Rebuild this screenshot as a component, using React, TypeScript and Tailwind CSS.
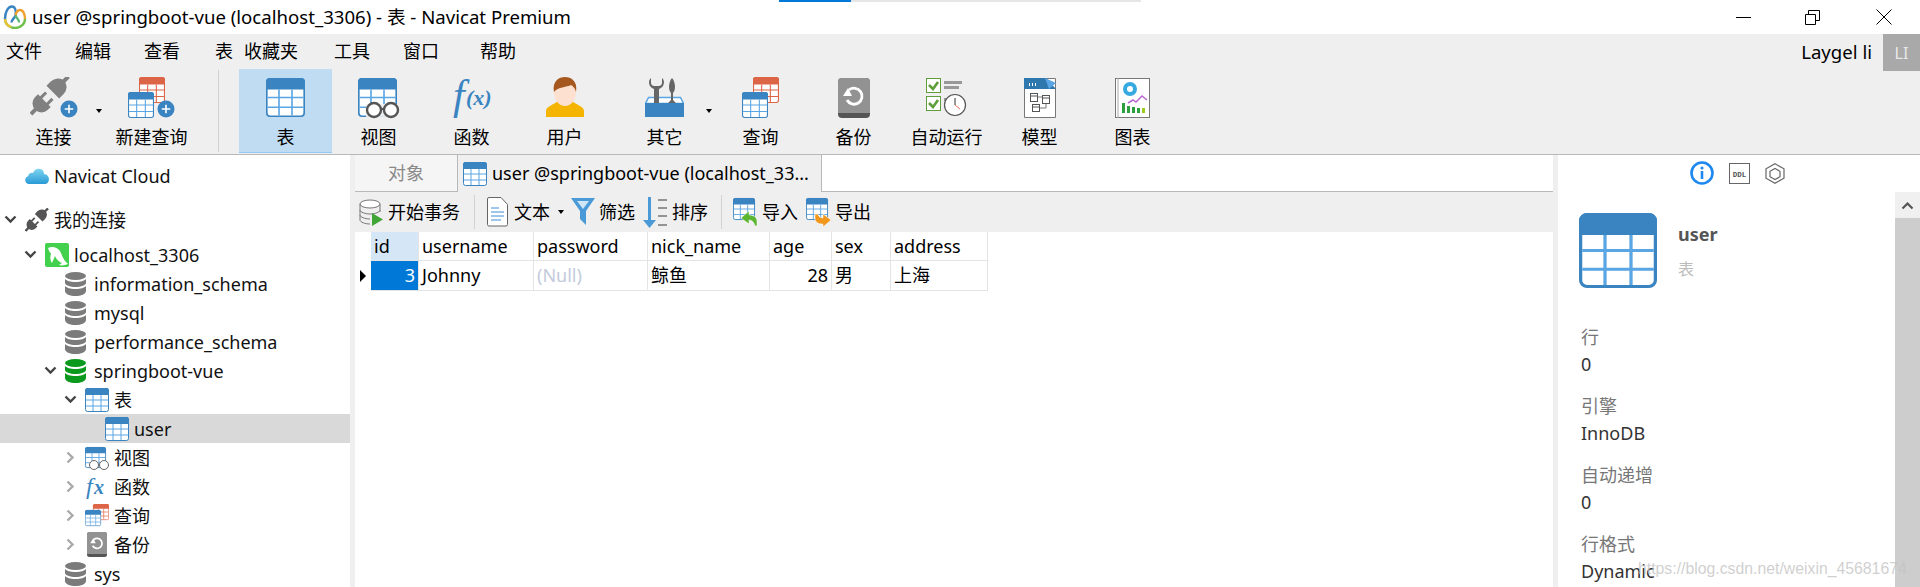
import type { ReactNode } from "react";

const BLUE = "#3a84c1";
const GRID = "#5aa5e3";
const RED = "#dc6447";

function TableIconGroup({ size, head, line }: { size: number; head: string; line: string }) {
  const s = size / 24;
  return (
    <g transform={`scale(${s})`}>
      <rect x="0.5" y="0.5" width="23" height="23" rx="2" fill="#fff" stroke={head} />
      <path d="M0 2.5a2.5 2.5 0 0 1 2.5-2.5h19a2.5 2.5 0 0 1 2.5 2.5v4.5h-24z" fill={head} />
      <path d="M8 7v16M16 7v16M1 12h22M1 18h22" stroke={line} strokeWidth="1" fill="none" />
    </g>
  );
}

function TableIcon({ w = 24, h = 24 }: { w?: number; h?: number }) {
  return (
    <svg width={w} height={h} viewBox="0 0 24 24" className="shrink-0" preserveAspectRatio="none">
      <TableIconGroup size={24} head={BLUE} line={GRID} />
    </svg>
  );
}

function Plug({ color = "#808080" }: { color?: string }) {
  return (
    <g transform="translate(20 18) rotate(45)" fill={color}>
      <rect x="-2" y="-26" width="4" height="8" />
      <path d="M-9 -4V-10A9 10 0 0 1 9 -10V-4z" />
      <rect x="-6" y="1" width="3" height="8" />
      <rect x="3" y="1" width="3" height="8" />
      <path d="M-9 8H9V12A9 9 0 0 1 -9 12z" />
      <rect x="-2" y="19" width="4" height="8" />
    </g>
  );
}

function PlusBadge({ cx, cy, r }: { cx: number; cy: number; r: number }) {
  return (
    <g>
      <circle cx={cx} cy={cy} r={r} fill={BLUE} />
      <path d={`M${cx - r / 2} ${cy}h${r}M${cx} ${cy - r / 2}v${r}`} stroke="#fff" strokeWidth="1.6" />
    </g>
  );
}

function ConnectIcon() {
  return (
    <svg width="48" height="41" viewBox="0 0 48 41">
      <Plug />
      <PlusBadge cx={39} cy={32} r={8.5} />
    </svg>
  );
}

function QueryIcon({ badge = false }: { badge?: boolean }) {
  return (
    <svg width={badge ? 48 : 37} height="42" viewBox={badge ? "0 0 48 42" : "0 0 37 42"}>
      <g transform="translate(11 0)">
        <TableIconGroup size={26} head={RED} line={RED} />
      </g>
      <g transform="translate(0 15)">
        <TableIconGroup size={26} head={BLUE} line={GRID} />
      </g>
      {badge && <PlusBadge cx={38} cy={32} r={8.5} />}
    </svg>
  );
}

function ViewIcon({ size = 42 }: { size?: number }) {
  return (
    <svg width={size} height={size} viewBox="0 0 42 42">
      <g transform="translate(0 1)">
        <TableIconGroup size={39} head={BLUE} line={GRID} />
      </g>
      <rect x="8" y="27" width="36" height="15" fill="#efefef" opacity="0.9" />
      <circle cx="16" cy="33" r="7" fill="#fff" stroke="#555" strokeWidth="2.4" />
      <circle cx="33" cy="33" r="7" fill="#fff" stroke="#555" strokeWidth="2.4" />
      <path d="M23 32h3" stroke="#555" strokeWidth="2" />
    </svg>
  );
}

function FxIcon() {
  return (
    <svg width="46" height="46" viewBox="0 0 46 46" className="mb-[6px]">
      <text x="4" y="37" fill={BLUE} fontSize="42" fontStyle="italic" fontFamily="'Liberation Serif', serif">f</text>
      <text x="17" y="33" fill={BLUE} fontSize="22" fontWeight="700" fontStyle="italic" fontFamily="'Liberation Serif', serif">(x)</text>
    </svg>
  );
}

function UserIcon() {
  return (
    <svg width="38" height="42" viewBox="0 0 38 42">
      <path d="M0 40v-6c0-5 8-6 12-10h14c4 4 12 5 12 10v6z" fill="#f5b400" />
      <ellipse cx="19" cy="15" rx="11" ry="14" fill="#fde0cf" />
      <path d="M8 15C6 4 13 0 19 0s13 4 11 15c-1-4-3-6-5-7-4 2-13 2-17 7z" fill="#a5571d" />
    </svg>
  );
}

function ToolsIcon() {
  return (
    <svg width="39" height="40" viewBox="0 0 39 40">
      <path d="M3.5 19.500h32l3 6H0.500z" fill="#fff" stroke={GRID} strokeWidth="1.5" />
      <rect x="0" y="25" width="39" height="14" fill={BLUE} />
      <path d="M6 0c-3 2-3 9 3 11v14h5V11c6-2 6-9 3-11v5c0 2-2 3-3 3H9C8 8 6 7 6 5z" fill="#666" />
      <path d="M27 0c2 2 3 6 3 9 0 3-1 5-2 6v7l3 3h-8l3-3v-7c-1-1-2-3-2-6 0-3 1-7 3-9z" fill="#666" />
    </svg>
  );
}

function BackupIcon({ size = 32 }: { size?: number }) {
  return (
    <svg width={size} height={size * 1.25} viewBox="0 0 32 40">
      <rect width="32" height="40" rx="4" fill="#555" />
      <path d="M0 4a4 4 0 0 1 4-4h24a4 4 0 0 1 4 4v31H0z" fill="#929292" />
      <path d="M11 12a8 8 0 1 1-2 10" stroke="#fff" strokeWidth="2.8" fill="none" />
      <path d="M5 18l5-8 4 8z" fill="#fff" />
    </svg>
  );
}

function AutoIcon() {
  return (
    <svg width="41" height="39" viewBox="0 0 41 39">
      <rect x="0.5" y="0.5" width="14" height="14" fill="#fff" stroke="#5f9e3b" />
      <rect x="0.5" y="18.5" width="14" height="14" fill="#fff" stroke="#5f9e3b" />
      <path d="M3 7l4 4 5-7M3 25l4 4 5-7" stroke="#5f9e3b" strokeWidth="2.6" fill="none" />
      <path d="M18 3h18v3H18zM18 8h15v3H18zM18 20h4v3h-4z" fill="#999" />
      <circle cx="29" cy="27" r="10.5" fill="#fff" stroke="#555" strokeWidth="1.2" />
      <path d="M29 20v7" stroke="#333" fill="none" />
      <path d="M29 27l5 4" stroke="#e8765b" />
    </svg>
  );
}

function ModelIcon() {
  return (
    <svg width="32" height="40" viewBox="0 0 32 40">
      <path d="M0.5 0.500h31v39h-31z" fill="#fff" stroke="#777" />
      <path d="M0 0h22l10 11H0z" fill="#2f78ae" />
      <path d="M21 0l11 5-7 6z" fill="#5aa5e3" />
      <path d="M5 5h1v3H5zM8 5h1v3H8zM11 5h1v3h-1z" fill="#fff" />
      <path d="M14 19h4M22 25v5h-7" stroke="#777" fill="none" />
      <g fill="#fff" stroke="#555">
        <rect x="6.5" y="15.500" width="7" height="8" />
        <rect x="18.5" y="17.500" width="7" height="8" />
        <rect x="8.5" y="26.500" width="7" height="7" />
      </g>
      <path d="M6 18h8M18 20h8M8 29h8" stroke="#555" fill="none" />
    </svg>
  );
}

function ChartIcon() {
  return (
    <svg width="35" height="40" viewBox="0 0 35 40">
      <rect x="0.5" y="0.500" width="34" height="39" fill="#fff" stroke="#777" />
      <path d="M3 0v40" stroke="#aaa" />
      <circle cx="15" cy="11" r="5" fill="none" stroke="#35a9e0" strokeWidth="4" />
      <path d="M13 25l5-3 3 2 6-6 5 4" stroke="#b86ad0" strokeWidth="1.5" fill="none" />
      <path d="M7 25h3v10H7zM12 28h3v7h-3zM17 29h3v6h-3zM22 30h3v5h-3z" fill="#2e9f3e" />
      <path d="M27 30h3v5h-3z" fill="#9ccc1e" />
    </svg>
  );
}

function Caret({ className = "" }: { className?: string }) {
  return <span className={`w-0 h-0 border-x-[3px] border-x-transparent border-t-[4px] border-t-black ${className}`} />;
}

function ToolButton({ label, icon, active, children }: { label: string; icon: ReactNode; active?: boolean; children?: ReactNode }) {
  return (
    <div className={`relative flex flex-col items-center w-[93px] h-[84px] shrink-0 ${active ? "bg-[#c0dcf3] border-b-[1px] border-b-[#90c8f6]" : ""}`}>
      <div className="h-[49px] mt-[4px] flex items-center justify-center">{icon}</div>
      <div className="text-[18px] leading-[24px] mt-[3px] whitespace-nowrap text-black">{label}</div>
      {children}
    </div>
  );
}

function DbIcon({ color = "#7b7b7b" }: { color?: string }) {
  return (
    <svg width="21" height="24" viewBox="0 0 21 24">
      <ellipse cx="10.5" cy="4" rx="10.5" ry="4" fill={color} />
      <path d="M0 7c2 2 5 3 10.500 3S19 9 21 7v4c0 2-5 4-10.500 4S0 13 0 11zM0 14c2 2 5 3 10.500 3s8.500-1 10.500-3v5c0 3-5 5-10.500 5S0 22 0 19z" fill={color} />
    </svg>
  );
}

function Down() {
  return (
    <svg width="13" height="9" viewBox="0 0 13 9">
      <path d="M1.5 1.500l5 5 5-5" stroke="#444" strokeWidth="2.4" fill="none" />
    </svg>
  );
}

function Right() {
  return (
    <svg width="9" height="13" viewBox="0 0 9 13" className="ml-[2px]">
      <path d="M1.5 1.500l5 5-5 5" stroke="#aaa" strokeWidth="2.4" fill="none" />
    </svg>
  );
}

function TreeRow({ pad, open, icon, label, selected }: { pad: string; open?: "down" | "right"; icon: ReactNode; label: string; selected?: boolean }) {
  return (
    <div className={`flex items-center h-[29px] ${pad} ${selected ? "bg-[#d9d9d9]" : ""}`}>
      <span className="w-[21px] shrink-0 flex items-center">
        {open === "down" && <Down />}
        {open === "right" && <Right />}
      </span>
      <span className="w-[29px] shrink-0 flex items-center">{icon}</span>
      <span className="text-[18px] leading-[24px] whitespace-nowrap text-[#111]">{label}</span>
    </div>
  );
}

function Cell({ w, children, className = "" }: { w: string; children?: ReactNode; className?: string }) {
  return <div className={`${w} shrink-0 h-full border-r border-b border-[#e4e4e4] pl-[3px] text-[18px] leading-[28px] whitespace-nowrap ${className}`}>{children}</div>;
}

function Info({ label, value }: { label: string; value: string }) {
  return (
    <div className="mb-[14px]">
      <div className="text-[18px] leading-[28px] text-[#777]">{label}</div>
      <div className="text-[18px] leading-[27px] text-[#333]">{value}</div>
    </div>
  );
}

function Action({ icon, label, className = "" }: { icon: ReactNode; label: string; className?: string }) {
  return (
    <div className={`flex items-center shrink-0 ${className}`}>
      {icon}
      <span className="text-[18px] leading-[24px] ml-[4px] whitespace-nowrap">{label}</span>
    </div>
  );
}

const MENU = [
  { label: "文件", w: "w-[69px]" },
  { label: "编辑", w: "w-[69px]" },
  { label: "查看", w: "w-[71px]" },
  { label: "表", w: "w-[29px]" },
  { label: "收藏夹", w: "w-[90px]" },
  { label: "工具", w: "w-[69px]" },
  { label: "窗口", w: "w-[77px]" },
  { label: "帮助", w: "w-[60px]" },
];

export default function App() {
  return (
    <div className="relative w-[1920px] h-[587px] overflow-hidden bg-white text-black font-['Noto_Sans','Noto_Sans_CJK_SC',sans-serif]">
      {/* title bar */}
      <div className="relative flex items-center h-[34px] bg-white">
        <svg width="24" height="24" viewBox="0 0 24 24" className="ml-[3px]">
          <path d="M2 14a10 9 0 0 0 20 0" fill="none" stroke="#6fc04a" strokeWidth="2.4" />
          <path d="M2 14a10 9 0 0 0 6 8" fill="none" stroke="#e8c23a" strokeWidth="2.4" />
          <path d="M2 14C2 7 5 1.500 9 1.500c3 0 4.500 4 3.500 9-1 3-4 4-4 7" fill="none" stroke="#3a84c1" strokeWidth="2.4" />
          <path d="M22 14c0-5-2-9-5-9-3 0-4 3-4.500 5.500" fill="none" stroke="#f0a030" strokeWidth="2.4" />
          <path d="M12.500 10.500c1 3 4 4 3.500 7" fill="none" stroke="#5cb878" strokeWidth="2.4" />
        </svg>
        <div className="ml-[5px] text-[18.6px] leading-[24px] whitespace-nowrap">user @springboot-vue (localhost_3306) - 表 - Navicat Premium</div>
        <div className="absolute left-[779px] top-0 w-[362px] h-[2px] bg-[#e6e6e6]">
          <div className="w-[72px] h-full bg-[#0078d7]" />
        </div>
        <div className="ml-auto flex items-center pr-[28px]">
          <span className="w-[15px] h-px bg-black mr-[54px]" />
          <svg width="15" height="15" viewBox="0 0 15 15" className="mr-[56px]">
            <path d="M0.5 4.500h10v10h-10zM3.500 4.500v-4h11v10h-4" fill="none" stroke="#000" />
          </svg>
          <svg width="16" height="16" viewBox="0 0 16 16">
            <path d="M0.5 0.500l15 15M15.500 0.500l-15 15" stroke="#000" fill="none" />
          </svg>
        </div>
      </div>

      {/* menu */}
      <div className="flex items-center h-[35px] bg-[#efefef] pl-[6px] text-[18px]">
        {MENU.map((m) => (
          <div key={m.label} className={`${m.w} shrink-0`}>{m.label}</div>
        ))}
        <div className="ml-auto text-[18.6px] mr-[11px]">Laygel li</div>
        <div className="flex items-center justify-center w-[37px] h-[37px] mb-[-2px] bg-[#a9a9a9] text-[#e8e8e8] text-[16px]">LI</div>
      </div>

      {/* main toolbar */}
      <div className="flex h-[86px] bg-[#efefef] border-b border-b-[#b8b8b8]">
        <div className="ml-[7px]">
          <ToolButton label="连接" icon={<ConnectIcon />}>
            <Caret className="absolute left-[89px] top-[40px]" />
          </ToolButton>
        </div>
        <div className="ml-[5px]">
          <ToolButton label="新建查询" icon={<QueryIcon badge />} />
        </div>
        <div className="ml-[20px] mt-px w-px h-[82px] bg-[#d2d2d2]" />
        <div className="ml-[20px] flex">
          <ToolButton active label="表" icon={<TableIcon w={39} h={39} />} />
          <ToolButton label="视图" icon={<ViewIcon />} />
          <ToolButton label="函数" icon={<FxIcon />} />
          <ToolButton label="用户" icon={<UserIcon />} />
        </div>
        <div className="ml-[7px] flex">
          <ToolButton label="其它" icon={<ToolsIcon />}>
            <Caret className="absolute left-[88px] top-[40px]" />
          </ToolButton>
        </div>
        <div className="ml-[3px] flex">
          <ToolButton label="查询" icon={<QueryIcon />} />
          <ToolButton label="备份" icon={<BackupIcon />} />
          <ToolButton label="自动运行" icon={<AutoIcon />} />
          <ToolButton label="模型" icon={<ModelIcon />} />
          <ToolButton label="图表" icon={<ChartIcon />} />
        </div>
      </div>

      <div className="flex h-[432px]">
        {/* tree */}
        <div className="w-[350px] shrink-0 pt-[6px] bg-white overflow-hidden">
          <TreeRow
            pad="pl-[4px]"
            label="Navicat Cloud"
            icon={
              <svg width="24" height="16" viewBox="0 0 24 16">
                <defs>
                  <linearGradient id="cloud" x1="0" y1="0" x2="0" y2="1">
                    <stop offset="0" stopColor="#7fd4f0" />
                    <stop offset="1" stopColor="#2a9bd6" />
                  </linearGradient>
                </defs>
                <path d="M4 16a4 4 0 0 1-1-7.800C4 5 6 4.500 8 5c1-3 4-5 7-4 3 0 4 3 4 5 3 0 5 3 5 5 0 3-2 5-4 5z" fill="url(#cloud)" />
              </svg>
            }
          />
          <div className="mt-[15px]">
            <TreeRow
              pad="pl-[4px]"
              open="down"
              label="我的连接"
              icon={
                <svg width="24" height="24" viewBox="0 0 40 38">
                  <Plug color="#555" />
                </svg>
              }
            />
          </div>
          <div className="mt-[6px]">
            <TreeRow
              pad="pl-[24px]"
              open="down"
              label="localhost_3306"
              icon={
                <svg width="24" height="24" viewBox="0 0 24 24">
                  <rect width="24" height="24" rx="2" fill="#43d14d" />
                  <path d="M3 5C7 3 12 4 15 8c2 4 3 8 6 11l2 2c-3 1-6 2-9 1l3-2c-3-1-6-4-7-7l-3 7c-2-3-2-6-1-9 0-1-2-2-3-6z" fill="#fff" />
                </svg>
              }
            />
          </div>
          <TreeRow pad="pl-[44px]" label="information_schema" icon={<DbIcon />} />
          <TreeRow pad="pl-[44px]" label="mysql" icon={<DbIcon />} />
          <TreeRow pad="pl-[44px]" label="performance_schema" icon={<DbIcon />} />
          <TreeRow pad="pl-[44px]" open="down" label="springboot-vue" icon={<DbIcon color="#0b9a1e" />} />
          <TreeRow pad="pl-[64px]" open="down" label="表" icon={<TableIcon />} />
          <TreeRow pad="pl-[84px]" selected label="user" icon={<TableIcon />} />
          <TreeRow
            pad="pl-[64px]"
            open="right"
            label="视图"
            icon={
              <svg width="24" height="24" viewBox="0 0 24 24">
                <g transform="translate(0 1)">
                  <TableIconGroup size={21} head={BLUE} line={GRID} />
                </g>
                <circle cx="9" cy="19" r="4.500" fill="#fff" stroke="#666" />
                <circle cx="19" cy="19" r="4.500" fill="#fff" stroke="#666" />
              </svg>
            }
          />
          <TreeRow
            pad="pl-[64px]"
            open="right"
            label="函数"
            icon={
              <svg width="24" height="24" viewBox="0 0 24 24">
                <text x="1" y="19" fill={BLUE} fontSize="24" fontStyle="italic" fontFamily="'Liberation Serif', serif">f</text>
                <text x="9" y="19" fill={BLUE} fontSize="20" fontWeight="700" fontStyle="italic" fontFamily="'Liberation Serif', serif">x</text>
              </svg>
            }
          />
          <TreeRow
            pad="pl-[64px]"
            open="right"
            label="查询"
            icon={
              <svg width="24" height="24" viewBox="0 0 24 24">
                <g transform="translate(8 0)">
                  <TableIconGroup size={16} head={RED} line={RED} />
                </g>
                <g transform="translate(0 6)">
                  <TableIconGroup size={16} head={BLUE} line={GRID} />
                </g>
              </svg>
            }
          />
          <TreeRow
            pad="pl-[64px]"
            open="right"
            label="备份"
            icon={
              <span className="ml-[2px] flex">
                <BackupIcon size={20} />
              </span>
            }
          />
          <TreeRow pad="pl-[44px]" label="sys" icon={<DbIcon />} />
        </div>

        {/* center */}
        <div className="w-[5px] shrink-0 bg-[#efefef]" />
        <div className="w-[1198px] shrink-0 bg-white">
          <div className="flex h-[37px] border-b border-b-[#b8b8b8] bg-white">
            <div className="flex items-center justify-center w-[102px] h-[36px] bg-[#f5f5f5] text-[18px] text-[#8a8a8a]">对象</div>
            <div className="flex items-center w-[365px] h-[37px] bg-[#efefef] border-x border-x-[#b8b8b8] pl-[5px]">
              <TableIcon />
              <span className="ml-[5px] text-[18px] whitespace-nowrap">user @springboot-vue (localhost_33...</span>
            </div>
          </div>
          <div className="flex items-center h-[40px] bg-[#efefef] pl-[4px]">
            <Action
              label="开始事务"
              icon={
                <svg width="25" height="27" viewBox="0 0 25 27">
                  <ellipse cx="11" cy="5" rx="10" ry="4" fill="#fff" stroke="#777" />
                  <path d="M1 5v16c0 2 5 4 10 4M21 5v8M1 11c0 2 5 4 10 4s10-2 10-4M1 16c0 2 5 4 10 4" fill="none" stroke="#777" />
                  <path d="M13 14l11 6.500-11 6.500z" fill="#3fa535" />
                </svg>
              }
            />
            <div className="ml-[14px] w-px h-[34px] bg-[#d2d2d2]" />
            <Action
              className="ml-[12px]"
              label="文本"
              icon={
                <svg width="21" height="30" viewBox="0 0 21 30" className="mr-[2px]">
                  <path d="M0.5 2a1.500 1.500 0 0 1 1.500-1.500h12l6.500 7v20a1.500 1.500 0 0 1-1.500 1.500H2a1.500 1.500 0 0 1-1.500-1.500z" fill="#fff" stroke="#666" />
                  <path d="M4 11h8M4 15h13M4 19h13M4 23h10" stroke="#3d8fd6" />
                </svg>
              }
            />
            <Caret className="ml-[8px]" />
            <Action
              className="ml-[7px]"
              label="筛选"
              icon={
                <svg width="24" height="30" viewBox="0 0 24 30">
                  <path d="M0 1h24l-9 13v14l-6-6v-8z" fill="#4a9ad8" />
                  <path d="M6 4h12l-6 8z" fill="#cfe6f7" />
                </svg>
              }
            />
            <Action
              className="ml-[8px]"
              label="排序"
              icon={
                <svg width="24" height="31" viewBox="0 0 24 31" className="mr-[1px]">
                  <path d="M5 0h3v23h5l-6.500 8L0 23h5z" fill="#4a9ad8" />
                  <path d="M15 3h9M15 11h9M15 19h9M15 28h9" stroke="#777" strokeWidth="1.5" />
                </svg>
              }
            />
            <div className="ml-[13px] w-px h-[34px] bg-[#d2d2d2]" />
            <Action
              className="ml-[11px]"
              label="导入"
              icon={
                <svg width="25" height="30" viewBox="0 0 25 30">
                  <g transform="translate(0 1)">
                    <TableIconGroup size={22} head={BLUE} line={GRID} />
                  </g>
                  <path d="M24 29v-5c0-4-4-6-8-6v-4l-8 7 8 6v-4c3 0 5 2 6 6z" fill="#5cb531" stroke="#fff" strokeWidth="0.5" />
                </svg>
              }
            />
            <Action
              className="ml-[8px]"
              label="导出"
              icon={
                <svg width="25" height="30" viewBox="0 0 25 30">
                  <g transform="translate(0 1)">
                    <TableIconGroup size={22} head={BLUE} line={GRID} />
                  </g>
                  <path d="M9 17v4c0 4 3 6 8 6v3l8-7-8-6v4c-3 0-5-2-5-4z" fill="#f0971c" stroke="#fff" strokeWidth="0.5" />
                </svg>
              }
            />
          </div>
          <div className="flex h-[29px]">
            <div className="w-[16px] shrink-0" />
            <Cell w="w-[48px]" className="bg-[#d5e7f6]">id</Cell>
            <Cell w="w-[115px]">username</Cell>
            <Cell w="w-[114px]">password</Cell>
            <Cell w="w-[122px]">nick_name</Cell>
            <Cell w="w-[62px]">age</Cell>
            <Cell w="w-[59px]">sex</Cell>
            <Cell w="w-[97px]">address</Cell>
          </div>
          <div className="flex h-[30px]">
            <div className="w-[16px] shrink-0 flex items-center justify-center">
              <span className="w-0 h-0 border-y-[6px] border-y-transparent border-l-[6px] border-l-black" />
            </div>
            <Cell w="w-[48px]" className="bg-[#0078d7] text-white text-right pr-[3px]">3</Cell>
            <Cell w="w-[115px]">Johnny</Cell>
            <Cell w="w-[114px]" className="text-[#c3cbdc]">(Null)</Cell>
            <Cell w="w-[122px]">鲸鱼</Cell>
            <Cell w="w-[62px]" className="text-right pr-[3px]">28</Cell>
            <Cell w="w-[59px]">男</Cell>
            <Cell w="w-[97px]">上海</Cell>
          </div>
        </div>
        <div className="w-[5px] shrink-0 bg-[#efefef]" />

        {/* info panel */}
        <div className="relative flex-1 bg-white">
          <div className="flex items-center h-[36px] pl-[132px]">
            <svg width="24" height="24" viewBox="0 0 24 24">
              <circle cx="12" cy="12" r="10.5" fill="none" stroke="#1e88f0" strokeWidth="2.6" />
              <path d="M12 10v8" stroke="#1e88f0" strokeWidth="2.6" />
              <circle cx="12" cy="7" r="1.6" fill="#1e88f0" />
            </svg>
            <svg width="21" height="21" viewBox="0 0 21 21" className="ml-[15px]">
              <rect x="0.5" y="0.500" width="20" height="20" fill="#fff" stroke="#666" />
              <text x="10.5" y="13.500" textAnchor="middle" fontSize="7.5" fontWeight="700" fill="#555" fontFamily="'Liberation Mono', monospace">DDL</text>
            </svg>
            <svg width="20" height="21" viewBox="0 0 20 21" className="ml-[15px]">
              <path d="M10 0.800l9 5v9.400l-9 5-9-5V5.800z" fill="none" stroke="#666" strokeWidth="1.2" />
              <path d="M10 5.500l5 2.800v5.400l-5 2.800-5-2.800V8.300z" fill="none" stroke="#666" strokeWidth="1.2" />
            </svg>
          </div>
          <div className="absolute right-0 top-[37px] w-[25px] bottom-0 bg-[#cdcdcd]">
            <div className="flex items-center justify-center h-[26px] bg-[#f0f0f0]">
              <svg width="13" height="9" viewBox="0 0 13 9">
                <path d="M1.5 7.500l5-5 5 5" stroke="#555" strokeWidth="2.2" fill="none" />
              </svg>
            </div>
          </div>
          <div className="flex pl-[21px] mt-[22px]">
            <TableIcon w={78} h={75} />
            <div className="ml-[21px]">
              <div className="text-[18px] font-bold leading-[24px] mt-[9px] text-[#555]">user</div>
              <div className="text-[16px] leading-[22px] mt-[12px] text-[#bbb]">表</div>
            </div>
          </div>
          <div className="pl-[23px] mt-[35px]">
            <Info label="行" value="0" />
            <Info label="引擎" value="InnoDB" />
            <Info label="自动递增" value="0" />
            <Info label="行格式" value="Dynamic" />
          </div>
        </div>
      </div>

      <div className="absolute left-[1638px] top-[558px] text-[15.8px] leading-[22px] text-[#c4c4c4]/80 font-['Liberation_Sans',sans-serif] whitespace-nowrap">
        https://blog.csdn.net/weixin_45681674
      </div>
    </div>
  );
}
